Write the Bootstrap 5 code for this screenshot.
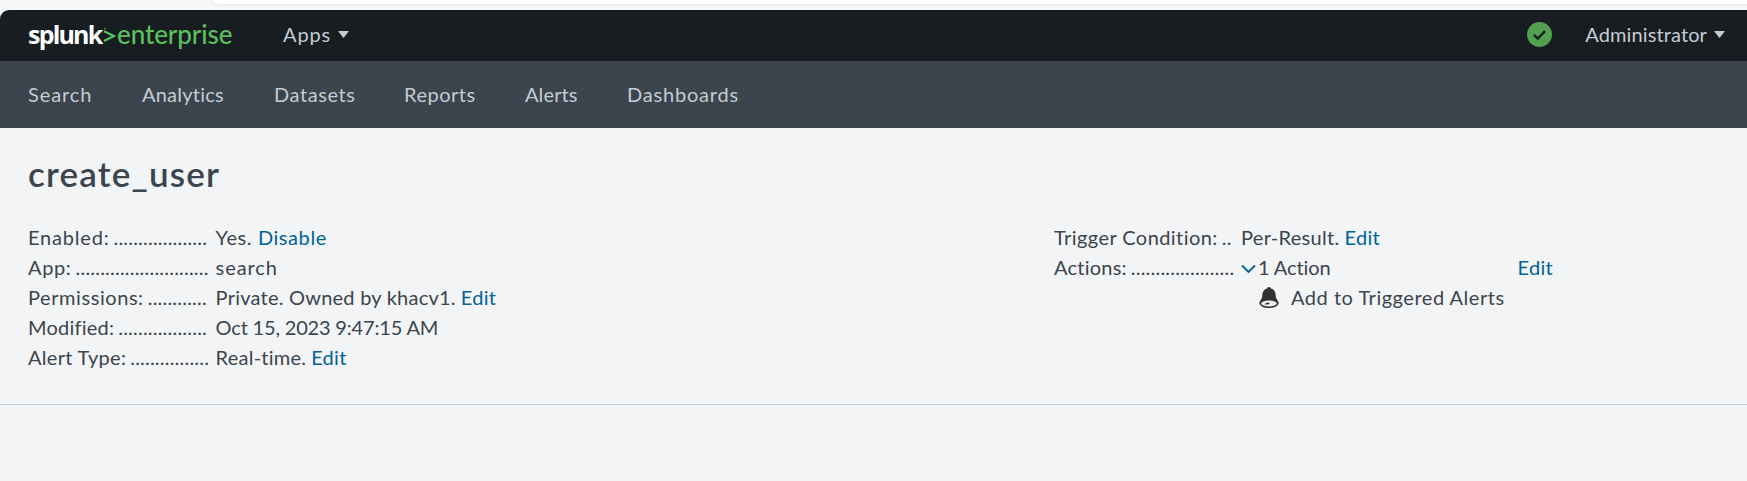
<!DOCTYPE html>
<html lang="en">
<head>
<meta charset="utf-8">
<title>create_user | Splunk</title>
<link rel="stylesheet" href="https://cdn.jsdelivr.net/npm/bootstrap@5.3.0/dist/css/bootstrap.min.css">
<script src="https://cdn.jsdelivr.net/npm/bootstrap@5.3.0/dist/js/bootstrap.bundle.min.js"></script>
<style>
  body { background: #f2f4f5; font-family: Lato, "Open Sans", sans-serif; font-size: 20px; line-height: 30px; color: #3c444d; overflow: hidden; white-space: nowrap; font-variant-ligatures: none; }
  a { color: #006297; text-decoration: none; }
  .chrome-strip { height: 10px; background: #f7f7f7; overflow: hidden; }
  .address-pill { height: 24px; margin-left: 209px; margin-top: -20px; margin-right: -30px; background: #fff; border-radius: 14px; box-shadow: 0 0 4px #ddd; }
  .chrome-edge { background: #f7f7f7; }
  .top-bar { height: 51px; background: #171d21; border-top-left-radius: 9px; padding: 0 22px 3px 28px; color: #c3cbd4; }
  .top-bar a, .app-bar a { color: #c3cbd4; }
  .app-bar { height: 67px; background: #3c444d; padding: 0 28px 1px; }
  .app-bar a { height: 30px; }
  .logo { font-size: 26px; width: 205px; margin-right: 50px; }
  .logo-name { font: 700 25px/30px "Open Sans", sans-serif; color: #fff; letter-spacing: -1.8px; width: 75px; }
  .logo-edition { color: #5cc05c; font-weight: 500; letter-spacing: -.1px; margin-left: 1px; }
  .w-1 { width: 114px; } .w-2 { width: 132px; } .w-3 { width: 130px; } .w-4 { width: 121px; } .w-5 { width: 102px; }
  h1 { font-size: 35px; font-weight: 600; line-height: 40px; letter-spacing: 1.2px; margin: 0; padding-top: 25px; height: 94px; }
  .summary { padding-left: 28px; height: 277px; border-bottom: 1px solid #c3cbd4; }
  .facts { display: grid; grid-template-columns: 180px 1fr; column-gap: 8px; grid-auto-rows: 30px; margin: 0; }
  .facts dt { font-weight: 400; display: flex; }
  .facts dd { margin: 0 0 0 -1px; display: flex; }
  .col-left dd { margin-left: -.4px; }
  .leader { letter-spacing: .21px; flex: none; margin-left: 4px; }
  .edit { margin-left: 5px; letter-spacing: .29px; }
  .edit-actions { margin-left: 187px; letter-spacing: .29px; }
  .link-disable { margin-left: 6px; }
  .user-menu { margin-left: 33px; }
  .caret { margin: 1px 0 0 7px; }
  .bell { margin-left: 18px; }
  .col-left { width: 1026px; }
  .s-n2 { letter-spacing: -.18px; } .s-n1 { letter-spacing: -.1px; } .s-1 { letter-spacing: .12px; } .s-2 { letter-spacing: .23px; } .s-3 { letter-spacing: .3px; }
  .s-4 { letter-spacing: .43px; } .s-5 { letter-spacing: .52px; } .s-6 { letter-spacing: .57px; } .s-7 { letter-spacing: .65px; }
  .s-8 { letter-spacing: .8px; } .s-10 { letter-spacing: .9px; }
</style>
</head>
<body>
<div class="chrome-strip"><div class="address-pill"></div></div>
<div class="chrome-edge">
  <header class="top-bar d-flex align-items-center">
    <div class="logo d-flex align-items-center"><span class="logo-name">splunk</span>
      <svg width="13" height="16" viewBox="0 0 13 16" fill="none" stroke="#5cc05c" stroke-width="2.2" class="mt-1 flex-shrink-0"><path d="M1 3.300 11 8 1 13"/><path d="M2 0v1.200" stroke-width="1.500"/></svg>
      <span class="logo-edition">enterprise</span></div>
    <a href="#" class="s-10">Apps</a>
    <svg class="caret" width="11" height="7"><path d="M0 0h11L5.500 7z" fill="#c3cbd4"/></svg>
    <svg class="ms-auto" width="25" height="25" viewBox="0 0 25 25"><circle cx="12.500" cy="12.500" r="12.500" fill="#53a051"/><path d="m7 12.800 3.800 3.700 7.200-7.300" fill="none" stroke="#171d21" stroke-width="2.400"/></svg>
    <a href="#" class="s-1 user-menu">Administrator</a>
    <svg class="caret" width="11" height="7"><path d="M0 0h11L5.500 7z" fill="#c3cbd4"/></svg>
  </header>
</div>
<nav class="app-bar d-flex align-items-center">
  <a href="#" class="w-1 s-10">Search</a><a href="#" class="w-2 s-2">Analytics</a><a href="#" class="w-3 s-6">Datasets</a><a href="#" class="w-4 s-5">Reports</a><a href="#" class="w-5 s-1">Alerts</a><a href="#" class="s-8">Dashboards</a>
</nav>
<main class="summary">
  <h1>create_user</h1>
  <div class="d-flex">
    <dl class="facts col-left">
      <dt><span class="s-8">Enabled:</span><span class="leader">...................</span></dt>
      <dd><span class="s-5">Yes.</span><a href="#" class="s-6 link-disable">Disable</a></dd>
      <dt><span class="s-7">App:</span><span class="leader">...........................</span></dt>
      <dd><span class="s-10">search</span></dd>
      <dt><span class="s-6">Permissions:</span><span class="leader">............</span></dt>
      <dd><span class="s-2">Private. Owned by khacv1.</span><a href="#" class="edit">Edit</a></dd>
      <dt><span class="s-2">Modified:</span><span class="leader">..................</span></dt>
      <dd><span class="s-n2">Oct 15, 2023 9:47:15 AM</span></dd>
      <dt><span class="s-3">Alert Type:</span><span class="leader">................</span></dt>
      <dd><span class="s-2">Real-time.</span><a href="#" class="edit">Edit</a></dd>
    </dl>
    <dl class="facts flex-grow-1">
      <dt><span class="s-4">Trigger Condition:</span><span class="leader">..</span></dt>
      <dd><span class="s-3">Per-Result.</span><a href="#" class="edit">Edit</a></dd>
      <dt><span class="s-2">Actions:</span><span class="leader">.....................</span></dt>
      <dd><svg width="17" height="30" viewBox="0 0 17 30" fill="none" stroke="#006297" stroke-width="1.900"><path d="m1 13.500 6.500 6.500 6.500-6.500"/></svg><span class="s-n1">1 Action</span><a href="#" class="edit-actions">Edit</a></dd>
      <dt></dt>
      <dd><svg class="bell" width="32" height="30" viewBox="0 0 32 30"><path d="M8 6.500Q8 5 10 5t2 1.500c4 1.200 4.700 4.500 4.900 9L19.700 20.500c0 3.500-4.200 5.500-9.700 5.500S.3 24 .3 20.500L3.100 15.500C3.300 11 4 7.700 8 6.500z" fill="#333"/><ellipse cx="10" cy="21.500" rx="7.900" ry="2.900" fill="#f2f4f5"/><path d="M5.500 22.200q2-2.400 5.500-1.200-1.500 2.300-5.500 1.200" fill="#333"/></svg><span class="s-5">Add to Triggered Alerts</span></dd>
    </dl>
  </div>
</main>
</body>
</html>
